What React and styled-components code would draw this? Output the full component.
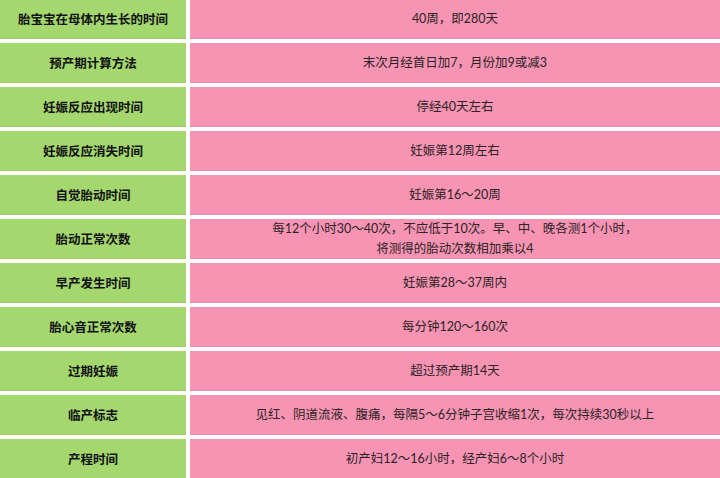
import React from "react";
import styled, { createGlobalStyle } from "styled-components";

const Global = createGlobalStyle`
  html, body { margin: 0; padding: 0; background: #ffffff; }
  body { font-family: "Lato", "Noto Sans CJK SC", "Noto Sans", sans-serif; }
`;

const Table = styled.div`
  display: grid;
  grid-template-columns: 186px 1fr;
  grid-auto-rows: 40px;
  column-gap: 4px;
  row-gap: 4px;
  width: 720px;
  margin-top: -1px;
  background: #ffffff;
`;

const Cell = styled.div`
  display: flex;
  align-items: center;
  justify-content: center;
  text-align: center;
  box-sizing: border-box;
  line-height: 20px;
  font-size: 12.5px;
`;

const Label = styled(Cell)`
  background: #a4d76e;
  color: #111111;
  font-weight: 700;
  font-family: "Noto Sans CJK SC", "Noto Sans", sans-serif;
  border-bottom: 1px solid #9ccd68;
`;

const Value = styled(Cell)`
  background: #f794b3;
  color: #2b2326;
  font-weight: 400;
  border-bottom: 1px solid #e98aa8;
  padding: 0 12px;
`;

const rows = [
  ["胎宝宝在母体内生长的时间", "40周，即280天"],
  ["预产期计算方法", "末次月经首日加7，月份加9或减3"],
  ["妊娠反应出现时间", "停经40天左右"],
  ["妊娠反应消失时间", "妊娠第12周左右"],
  ["自觉胎动时间", "妊娠第16～20周"],
  ["胎动正常次数", "每12个小时30～40次，不应低于10次。早、中、晚各测1个小时，\n将测得的胎动次数相加乘以4"],
  ["早产发生时间", "妊娠第28～37周内"],
  ["胎心音正常次数", "每分钟120～160次"],
  ["过期妊娠", "超过预产期14天"],
  ["临产标志", "见红、阴道流液、腹痛，每隔5～6分钟子宫收缩1次，每次持续30秒以上"],
  ["产程时间", "初产妇12～16小时，经产妇6～8个小时"],
];

export default function App() {
  return (
    <>
      <Global />
      <Table>
        {rows.map(([k, v]) => (
          <React.Fragment key={k}>
            <Label>{k}</Label>
            <Value>
              <span>
                {v.split("\n").map((line, i) => (
                  <React.Fragment key={i}>
                    {i > 0 && <br />}
                    {line}
                  </React.Fragment>
                ))}
              </span>
            </Value>
          </React.Fragment>
        ))}
      </Table>
    </>
  );
}
